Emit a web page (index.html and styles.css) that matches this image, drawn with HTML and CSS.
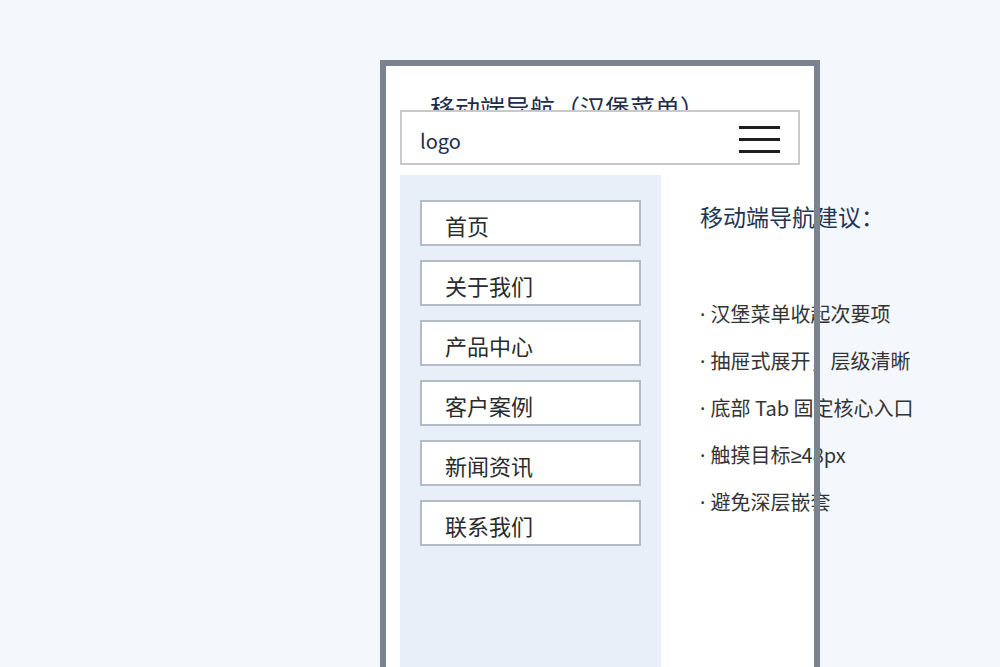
FILE: index.html
```html
<!DOCTYPE html>
<html lang="zh-CN">
<head>
  <meta charset="UTF-8" />
  <meta name="viewport" content="width=device-width, initial-scale=1.0"/>
  <title>移动端导航（汉堡菜单）</title>
  <link rel="stylesheet" href="styles.css">
</head>
<body>
  <div class="stage">
    <div class="phone">
      <h1 class="title">移动端导航（汉堡菜单）</h1>
      <header class="topbar">
        <span class="logo">logo</span>
        <span class="burger"><i></i><i></i><i></i></span>
      </header>
      <div class="screen">
        <nav class="drawer">
          <div class="menu-item">首页</div>
          <div class="menu-item">关于我们</div>
          <div class="menu-item">产品中心</div>
          <div class="menu-item">客户案例</div>
          <div class="menu-item">新闻资讯</div>
          <div class="menu-item">联系我们</div>
        </nav>
        <div class="tips">
          <h2>移动端导航建议：</h2>
          <ul>
            <li><span class="latin">· </span>汉堡菜单收起次要项</li>
            <li><span class="latin">· </span>抽屉式展开，层级清晰</li>
            <li><span class="latin">· </span>底部 Tab 固定核心入口</li>
            <li><span class="latin">· </span>触摸目标<span class="latin">≥</span>48px</li>
            <li><span class="latin">· </span>避免深层嵌套</li>
          </ul>
        </div>
      </div>
    </div>
  </div>
</body>
</html>
```

FILE: styles.css
```css
html, body { margin: 0; height: 667px; overflow: hidden; }
body { background: #f4f7fb; font-family: "Noto Sans CJK SC", "Noto Sans", sans-serif; color: #333; }
.stage { padding: 60px 0 0 380px; }

.phone {
  position: relative; width: 440px; height: 640px; box-sizing: border-box;
  padding: 0 20px 0 20px; background: #fff; display: flex; flex-direction: column;
}
.phone::after {
  content: ""; position: absolute; inset: 0; border: 6px solid #7b838e; border-bottom: 0;
  pointer-events: none;
}

.title {
  margin: 0; padding: 32px 0 0 30px; font-size: 25px; line-height: 30px;
  font-weight: normal; color: #1d2d4c; white-space: nowrap;
}

.topbar {
  position: relative; margin-top: -12px; height: 55px; box-sizing: border-box;
  border: 2px solid #c9c9cb; background: #fff; display: flex; align-items: center;
  justify-content: space-between; padding: 0 18px 0 18px;
}
.logo { font-size: 20px; color: #1d2d4c; margin-top: 6px; }
.burger { display: flex; flex-direction: column; gap: 9px; width: 41px; margin-top: 4px; }
.burger i { display: block; height: 3px; background: #1e1e1e; }

.screen { flex: 1; display: flex; margin-top: 10px; }
.drawer {
  width: 261px; box-sizing: border-box; background: #e8eff8; padding: 25px 20px;
  display: flex; flex-direction: column; gap: 14px;
}
.menu-item {
  width: 221px; height: 46px; box-sizing: border-box; border: 2px solid #b3bbc6;
  background: #fff; padding: 6px 0 0 23px; font-size: 22px; line-height: 34px; color: #2b2b2b;
}

.tips { padding: 26px 0 0 39px; white-space: nowrap; }
.tips h2 { margin: 0; font-size: 23px; line-height: 30px; font-weight: normal; color: #1d3557; }
.tips ul { list-style: none; margin: 60px 0 0; padding: 0; }
.tips li { font-size: 20px; line-height: 46px; color: #333; }
.latin { font-family: "Noto Sans", sans-serif; }
```
